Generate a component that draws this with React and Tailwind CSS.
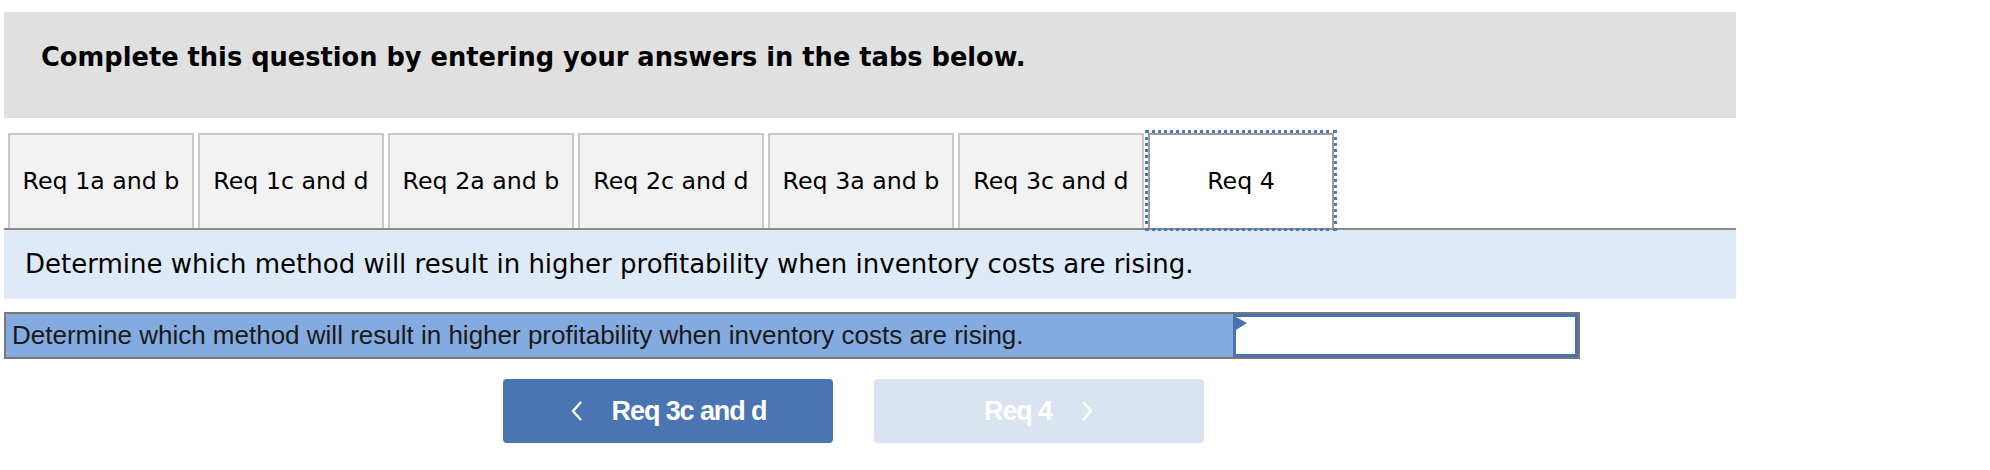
import React from 'react'

const tabs = [
  'Req 1a and b',
  'Req 1c and d',
  'Req 2a and b',
  'Req 2c and d',
  'Req 3a and b',
  'Req 3c and d',
  'Req 4',
]

const ChevronLeft = () => (
  <svg width="14" height="24" viewBox="0 0 14 24" fill="none">
    <polyline points="11,3 3,12 11,21" stroke="white" strokeWidth="2.4" />
  </svg>
)

const ChevronRight = () => (
  <svg width="14" height="24" viewBox="0 0 14 24" fill="none">
    <polyline points="3,3 11,12 3,21" stroke="white" strokeWidth="2.4" />
  </svg>
)

const App = () => {
  return (
    <div className="w-[1990px] h-[470px] bg-white pl-1 pt-3 font-['DejaVu_Sans',Verdana,sans-serif] text-black">
      {/* Instructions */}
      <div className="w-[1732px] h-[106px] bg-[#e0e0e0] pl-[37px] pt-[30px]">
        <p className="text-[25.7px] leading-[30px] font-bold">
          Complete this question by entering your answers in the tabs below.
        </p>
      </div>

      {/* Tabs */}
      <div className="w-[1732px] mt-[15px] border-b-2 border-[#8a8a8a] flex gap-1 pl-1">
        {tabs.map((t, i) => (
          <div
            key={t}
            className={
              i === tabs.length - 1
                ? 'w-[186px] h-[95px] border-2 border-b-0 border-[#9c9c9c] bg-white flex items-center justify-center text-[23.7px] outline-[3px] outline-dotted outline-[#4a78c8] outline-offset-0'
                : 'w-[186px] h-[95px] border-2 border-b-0 border-[#c9c9c9] bg-[#f2f2f2] flex items-center justify-center text-[23.7px]'
            }
          >
            {t}
          </div>
        ))}
      </div>

      {/* Question */}
      <div className="w-[1732px] h-[69px] bg-[#deeaf7] flex items-center pl-[21px] text-[26px]">
        Determine which method will result in higher profitability when inventory costs are rising.
      </div>

      {/* Answer row */}
      <div className="w-[1576px] h-[47px] mt-[13px] border-2 border-[#777777] flex">
        <div className="flex-1 bg-[#84abdf] flex items-center pl-[6px] font-['Liberation_Sans',Arial,sans-serif] text-[26px] text-[#1a1a1a]">
          Determine which method will result in higher profitability when inventory costs are rising.
        </div>
        <div className="relative w-[345px] bg-white border-[3px] border-[#4a72b2]">
          <svg className="absolute left-0 top-0" width="11" height="13" viewBox="0 0 11 13">
            <polygon points="0,0 11,6 0,13" fill="#4a72b2" />
          </svg>
        </div>
      </div>

      {/* Navigation */}
      <div className="flex gap-[41px] mt-5 pl-[499px] font-['Liberation_Sans',Arial,sans-serif] font-bold text-[27px] text-white">
        <button className="w-[330px] h-[64px] rounded-[4px] bg-[#4a74b2] flex items-center justify-center gap-[28px]">
          <ChevronLeft />
          <span className="tracking-[-1.1px]">Req 3c and d</span>
        </button>
        <button className="w-[330px] h-[64px] rounded-[4px] bg-[#dae4f0] flex items-center justify-center gap-[28px]">
          <span className="tracking-[-1.1px]">Req 4</span>
          <ChevronRight />
        </button>
      </div>
    </div>
  )
}

export default App
